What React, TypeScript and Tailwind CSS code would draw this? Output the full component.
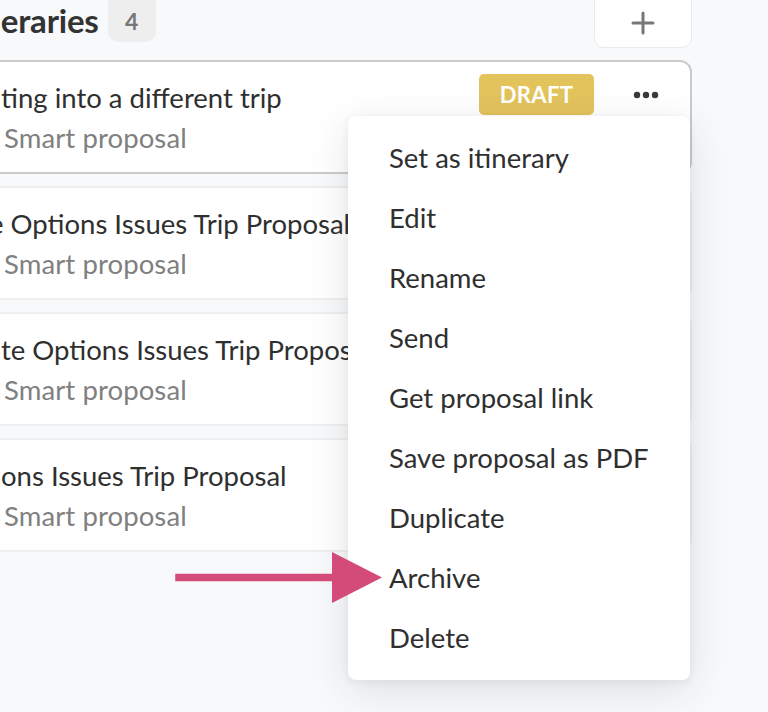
import React from "react";

const cards = [
  { title: "ting into a different trip", shift: "ml-[-1px]", active: true },
  { title: "e Options Issues Trip Proposal", shift: "ml-[-13px]", active: false },
  { title: "te Options Issues Trip Proposal", shift: "ml-[-1px]", active: false },
  { title: "ons Issues Trip Proposal", shift: "ml-[-1px]", active: false },
];

const menuItems = [
  "Set as itinerary",
  "Edit",
  "Rename",
  "Send",
  "Get proposal link",
  "Save proposal as PDF",
  "Duplicate",
  "Archive",
  "Delete",
];

function PlusIcon() {
  return (
    <svg width="24" height="24" viewBox="0 0 24 24" fill="none">
      <path d="M12 2v20M2 12h20" stroke="#777" strokeWidth="3" strokeLinecap="round" />
    </svg>
  );
}

function DotsIcon() {
  return (
    <svg width="26" height="8" viewBox="0 0 26 8">
      <circle cx="4" cy="4" r="3.2" fill="#3a3a3a" />
      <circle cx="13" cy="4" r="3.2" fill="#3a3a3a" />
      <circle cx="22" cy="4" r="3.2" fill="#3a3a3a" />
    </svg>
  );
}

export default function App() {
  return (
    <div className="relative h-[712px] w-[768px] overflow-hidden bg-[#f8f9fa] font-['Lato','Open_Sans',sans-serif] text-[#2f2f2f]">
      <div className="ml-[-40px] flex w-[732px] flex-col">
        {/* Header */}
        <div className="flex h-[48px] items-start">
          <div className="ml-[-7px] flex items-start">
            <h1 className="text-[33px] font-bold leading-[40px] tracking-[-0.2px] text-[#333]">Itineraries</h1>
            <span className="ml-[9px] mt-[-8px] flex h-[50px] w-[48px] items-center justify-center rounded-[10px] bg-[#eeeeee] pt-[8px] text-[23px] font-bold text-[#777]">
              4
            </span>
          </div>
          <button className="ml-auto mt-[-10px] flex h-[58px] w-[98px] items-center justify-center rounded-b-[10px] border border-[#ebebeb] bg-white pt-[8px]">
            <PlusIcon />
          </button>
        </div>

        {/* Cards */}
        <div className="mt-[12px] flex flex-col gap-[12px]">
          {cards.map((c, i) => (
            <div
              key={i}
              className={`flex h-[114px] items-start rounded-[12px] bg-white pl-[40px] ${
                c.active ? "border-2 border-[#cbcbcb]" : "border-2 border-[#efefef]"
              }`}
            >
              <div className={`min-w-0 flex-1 overflow-hidden pt-[16px] ${c.shift}`}>
                <div className="whitespace-nowrap text-[27.5px] leading-[40px] text-[#2f2f2f]">{c.title}</div>
                <div className="whitespace-nowrap text-[27.5px] leading-[40px] tracking-[0.1px] text-[#808080]">
                  <span className={i === 1 ? "ml-[15px]" : "ml-[3px]"}>Smart proposal</span>
                </div>
              </div>
              {c.active && (
                <div className="flex items-center pr-[31px] pt-[12px]">
                  <span className="flex h-[41px] w-[115px] items-center justify-center rounded-[5px] bg-[#e3c35c] text-[22px] font-bold tracking-[0.3px] text-white">
                    DRAFT
                  </span>
                  <span className="ml-[39px] flex h-[41px] items-center">
                    <DotsIcon />
                  </span>
                </div>
              )}
            </div>
          ))}
        </div>
      </div>

      {/* Dropdown menu */}
      <div className="absolute left-[348px] top-[116px] w-[342px] rounded-[8px] bg-white py-[12px] shadow-[0_10px_40px_rgba(30,40,60,0.12),0_2px_8px_rgba(30,40,60,0.06)]">
        {menuItems.map((m) => (
          <div key={m} className="flex h-[60px] items-center pl-[41px] text-[27.5px] text-[#2f2f2f]">
            {m}
          </div>
        ))}
      </div>

      {/* Annotation arrow */}
      <svg className="absolute left-[170px] top-[548px]" width="220" height="60" viewBox="0 0 220 60">
        <path d="M9 29.5H166" stroke="#d44a78" strokeWidth="7.5" strokeLinecap="square" />
        <path d="M162 4L212 29.5L162 55Z" fill="#d44a78" />
      </svg>
    </div>
  );
}
